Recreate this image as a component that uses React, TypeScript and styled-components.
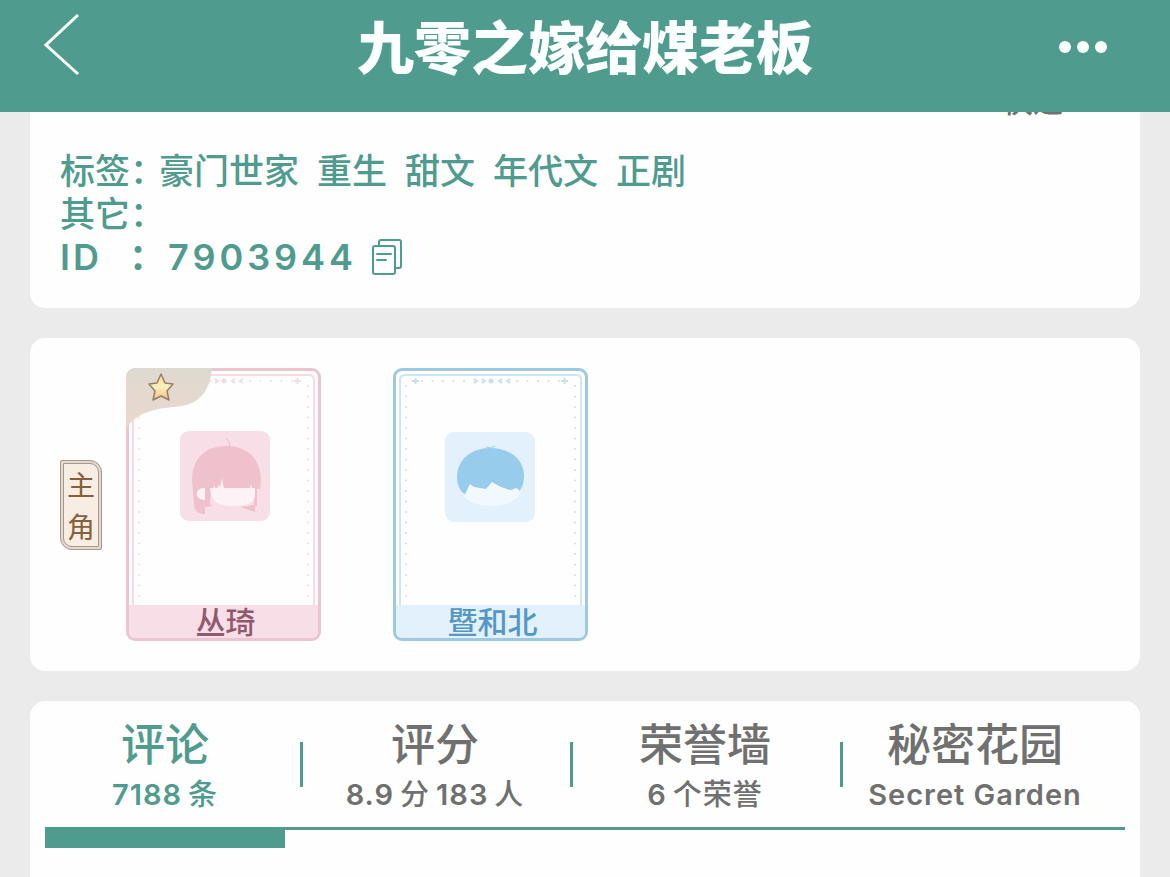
import React from "react";
import styled, { createGlobalStyle } from "styled-components";

const GREEN = "#4f9b8e";
const INK = "#707070";
const SANS = 'Inter, "Noto Sans CJK SC", sans-serif';

const GlobalStyle = createGlobalStyle`
  * { box-sizing: border-box; }
  body { margin: 0; background: #ebebeb; font-family: ${SANS}; overflow: hidden; }
  button { border: 0; padding: 0; background: none; font: inherit; color: inherit; cursor: pointer; }
  h1, dl, dd, dt, ul { margin: 0; padding: 0; }
`;

const Page = styled.div`
  height: 100vh;
  display: flex;
  flex-direction: column;
  overflow: hidden;
`;

const Header = styled.header`
  flex: none;
  display: grid;
  grid-template-columns: 80px 1fr 80px;
  align-items: center;
  height: 112px;
  padding: 0 32px 14px;
  background: ${GREEN};
  color: #fbffff;
`;

const Title = styled.h1`
  font-size: 57px;
  line-height: 72px;
  font-weight: 800;
  text-align: center;
`;

const IconButton = styled.button<{ $end?: boolean }>`
  display: flex;
  justify-self: ${(p) => (p.$end ? "end" : "start")};
`;

const Content = styled.main`
  flex: 1;
  min-height: 0;
  overflow: hidden;
  display: flex;
  flex-direction: column;
  gap: 30px;
  padding: 0 30px;
`;

const Card = styled.section`
  flex: none;
  background: #fefefe;
  border-radius: 15px;
`;

const InfoCard = styled(Card)`
  margin-top: -40px;
  height: 236px;
  padding: 7px 30px 28px;
  color: ${GREEN};
  font-weight: 500;
`;

const Pace = styled.p`
  margin: 0 47px 27px 0;
  color: ${INK};
  font-size: 30px;
  line-height: 44px;
  text-align: right;
`;

const InfoList = styled.dl`
  font-size: 35px;
  line-height: 43px;
`;

const InfoRow = styled.div`
  display: flex;
  min-height: 43px;
`;

const Label = styled.dt`
  width: 99px;
  white-space: nowrap;
`;

const Tags = styled.dd`
  display: flex;
  gap: 18px;
`;

const IdLabel = styled.dt`
  display: flex;
  justify-content: space-between;
  width: 108px;
  font-size: 36px;
  font-weight: 600;
  letter-spacing: 3px;
`;

const IdValue = styled.dd`
  display: flex;
  align-items: center;
  gap: 14px;
  font-size: 36px;
  font-weight: 600;
  letter-spacing: 4px;
`;

const CastCard = styled(Card)`
  display: flex;
  align-items: center;
  padding: 30px;
`;

const Role = styled.div`
  width: 42px;
  height: 90px;
  border: 1px solid #a89888;
  border-radius: 2px 12px 2px 12px;
  background: #e3d9ce;
  padding: 2px;
`;

const RoleInner = styled.div`
  height: 100%;
  padding-top: 1px;
  border: 1px solid #a89888;
  border-radius: 1px 9px 1px 9px;
  background: #f8ede3;
  color: #85603a;
  font-size: 28px;
  line-height: 42px;
  text-align: center;
`;

const CastList = styled.ul`
  display: flex;
  gap: 72px;
  margin-left: 24px;
  list-style: none;
`;

type Tone = { line: string; soft: string; fill: string; text: string; dot: string };

const PersonCard = styled.li<{ $tone: Tone }>`
  position: relative;
  display: flex;
  flex-direction: column;
  width: 195px;
  height: 273px;
  border: 3px solid ${(p) => p.$tone.line};
  border-radius: 9px;
`;

const Portrait = styled.div`
  flex: 1;
  min-height: 0;
  display: flex;
  svg { display: block; }
`;

const Name = styled.div<{ $tone: Tone }>`
  height: 33px;
  padding-left: 4px;
  border-radius: 0 0 6px 6px;
  background: ${(p) => p.$tone.fill};
  color: ${(p) => p.$tone.text};
  font-size: 30px;
  line-height: 35px;
  font-weight: 500;
  text-align: center;
`;

const LeadBadge = styled.svg`
  position: absolute;
  top: -3px;
  left: -3px;
  border-top-left-radius: 9px;
`;

const TabsCard = styled(Card)`
  flex: 1 0 auto;
  border-radius: 15px 15px 0 0;
`;

const TabBar = styled.nav`
  display: grid;
  grid-template-columns: repeat(4, 1fr);
  height: 126px;
  padding-right: 30px;
`;

const Tab = styled.button<{ $active?: boolean }>`
  position: relative;
  display: flex;
  flex-direction: column;
  align-items: center;
  padding-top: 15px;
  color: ${(p) => (p.$active ? GREEN : INK)};
  font-weight: 500;
  &:not(:first-child)::before {
    content: "";
    position: absolute;
    left: 0;
    top: 41px;
    width: 3px;
    height: 45px;
    background: ${GREEN};
  }
`;

const TabTitle = styled.span`
  font-size: 44px;
  line-height: 58px;
`;

const TabNote = styled.span`
  display: flex;
  gap: 6px;
  font-size: 29px;
  line-height: 42px;
  font-weight: 500;
  letter-spacing: 1px;
`;

const Latin = styled.span`
  font-weight: 600;
`;

const Rule = styled.div`
  margin: 0 15px;
  border-top: 3px solid ${GREEN};
`;

const ActiveBar = styled.div`
  width: 240px;
  height: 18px;
  background: ${GREEN};
`;

const pink: Tone = { line: "#ebc6d1", soft: "#f6dbe3", fill: "#f8dfe7", text: "#90596e", dot: "#eedde3" };
const blue: Tone = { line: "#9fc9e3", soft: "#cee5f3", fill: "#e2f1fc", text: "#5497c5", dot: "#c8e0ed" };

const Frame = ({ tone, children }: { tone: Tone; children: React.ReactNode }) => (
  <svg width="189" height="234" viewBox="0 0 189 234" fill="none">
    <path d="M4 234V9q0-5 5-5h171q5 0 5 5v225" stroke={tone.soft} strokeWidth="2" />
    <path d="M10 15V230M179 15V230" stroke={tone.dot} strokeWidth="2" strokeLinecap="round" strokeDasharray="0 10.5" />
    <path d="M26 10H72M121 10H166" stroke={tone.dot} strokeWidth="2" strokeLinecap="round" strokeDasharray="0 10.5" />
    <path d="M16 10h7M19.500 7v6M165 10h7M168.500 7v6M78 8l3 2-3 2M86 8l3 2-3 2M106 8l-3 2 3 2M114 8l-3 2 3 2" stroke={tone.dot} strokeWidth="2" />
    <circle cx="95" cy="10" r="2.500" fill={tone.dot} />
    {children}
  </svg>
);

const Girl = () => (
  <g transform="translate(51 60)">
    <rect width="90" height="90" rx="9" fill="#f8dfe7" />
    <path d="M46 8q5 2 3 8" stroke="#e9bcc8" strokeWidth="1" />
    <path d="M12 50C12 26 26 15 47 15s34 14 34 34l-1 9H25V83c-7 0-11-3-11-11Z" fill="#efc1cd" />
    <path d="M25 57h6l-1 17-5 2ZM74 57h3v18h-3Z" fill="#efc1cd" />
    <path d="M30 57h45v8c-1 7-9 10-22 10s-22-3-23-18Z" fill="#fdf3f6" />
    <path d="M25 57c-11-1-11 12 0 12ZM33 58l2-4v4ZM37 58l2-5 1 4 2-10 2 11ZM70 58l1-5 1 5Z" fill="#fdf3f6" />
    <path d="M60 76l15-2v7ZM25 76v-5l8 4Z" fill="#efc1cd" />
  </g>
);

const Boy = () => (
  <g transform="translate(49 61)">
    <rect width="90" height="90" rx="9" fill="#e2f1fc" />
    <path d="M41 15l5 1 4-2" stroke="#98cced" strokeWidth="1" />
    <path d="M20 62C15 60 12 52 12 45c0-18 15-29 33-29s34 10 34 28c0 8-3 15-7 17Z" fill="#98cced" />
    <path d="M19 64c2-3 4-9 6-12l4 3 12 2 6-7 9 5 9 3c3 0 6-4 9 0 3 3-1 8-4 9-7 5-14 7-22 7-12 0-24-3-29-10Z" fill="#f1f8fe" />
  </g>
);

const CopyIcon = () => (
  <svg width="32" height="38" viewBox="0 0 32 38" fill="none" stroke={GREEN} strokeWidth="2" strokeLinecap="round">
    <path d="M8 6V3q0-2 2-2h18q2 0 2 2v24q0 2-2 2h-4" />
    <rect x="2" y="7" width="22" height="28" rx="2" />
    <path d="M6 15h14M6 21h9" />
  </svg>
);

const tabs = [
  { title: "评论", note: ["7188", "条"] },
  { title: "评分", note: ["8.9", "分", "183", "人"] },
  { title: "荣誉墙", note: ["6", "个荣誉"] },
  { title: "秘密花园", note: ["Secret Garden"] },
];

export default function App() {
  return (
    <>
      <GlobalStyle />
      <Page>
        <Header>
          <IconButton aria-label="返回">
            <svg width="60" height="70" viewBox="0 0 60 70" fill="none" stroke="#fbffff" strokeWidth="3">
              <path d="M46 1L14 31l32 29" />
            </svg>
          </IconButton>
          <Title>九零之嫁给煤老板</Title>
          <IconButton $end aria-label="更多">
            <svg width="80" height="16" viewBox="0 0 80 16" fill="#fbffff">
              <circle cx="7" cy="6" r="6" />
              <circle cx="25" cy="6" r="6" />
              <circle cx="43" cy="6" r="6" />
            </svg>
          </IconButton>
        </Header>
        <Content>
          <InfoCard>
            <Pace>快速</Pace>
            <InfoList>
              <InfoRow>
                <Label>标签：</Label>
                <Tags>
                  {["豪门世家", "重生", "甜文", "年代文", "正剧"].map((t) => (
                    <span key={t}>{t}</span>
                  ))}
                </Tags>
              </InfoRow>
              <InfoRow>
                <Label>其它：</Label>
              </InfoRow>
              <InfoRow>
                <IdLabel>
                  <span>ID</span>
                  <span>：</span>
                </IdLabel>
                <IdValue>
                  7903944
                  <IconButton aria-label="复制">
                    <CopyIcon />
                  </IconButton>
                </IdValue>
              </InfoRow>
            </InfoList>
          </InfoCard>
          <CastCard>
            <Role>
              <RoleInner>
                主
                <br />
                角
              </RoleInner>
            </Role>
            <CastList>
              <PersonCard $tone={pink}>
                <Portrait>
                  <Frame tone={pink}>
                    <Girl />
                  </Frame>
                </Portrait>
                <Name $tone={pink}>丛琦</Name>
                <LeadBadge width="88" height="62" viewBox="0 0 88 62">
                  <defs>
                    <linearGradient id="corner" x1="0" y1="0" x2="0" y2="1">
                      <stop offset="0" stopColor="#ded9d0" />
                      <stop offset="1" stopColor="#ead8cd" />
                    </linearGradient>
                    <linearGradient id="star" x1="0" y1="0" x2="0" y2="1">
                      <stop offset="0" stopColor="#f3dc8c" />
                      <stop offset="0.500" stopColor="#fbf0bd" />
                      <stop offset="1" stopColor="#f0bd83" />
                    </linearGradient>
                  </defs>
                  <path d="M0 0H86C84 22 75 33 60 37S17 37 0 60Z" fill="url(#corner)" />
                  <path d="M35 6l4 9 8 1-6 7 2 9-8-4-8 4 2-9-6-7 8-1Z" fill="url(#star)" stroke="#94806a" strokeWidth="1.500" strokeLinejoin="round" />
                </LeadBadge>
              </PersonCard>
              <PersonCard $tone={blue}>
                <Portrait>
                  <Frame tone={blue}>
                    <Boy />
                  </Frame>
                </Portrait>
                <Name $tone={blue}>暨和北</Name>
              </PersonCard>
            </CastList>
          </CastCard>
          <TabsCard>
            <TabBar>
              {tabs.map(({ title, note }, i) => (
                <Tab key={title} $active={i === 0}>
                  <TabTitle>{title}</TabTitle>
                  <TabNote>
                    {note.map((part) =>
                      /^[\w. ]+$/.test(part) ? <Latin key={part}>{part}</Latin> : <span key={part}>{part}</span>
                    )}
                  </TabNote>
                </Tab>
              ))}
            </TabBar>
            <Rule>
              <ActiveBar />
            </Rule>
          </TabsCard>
        </Content>
      </Page>
    </>
  );
}
